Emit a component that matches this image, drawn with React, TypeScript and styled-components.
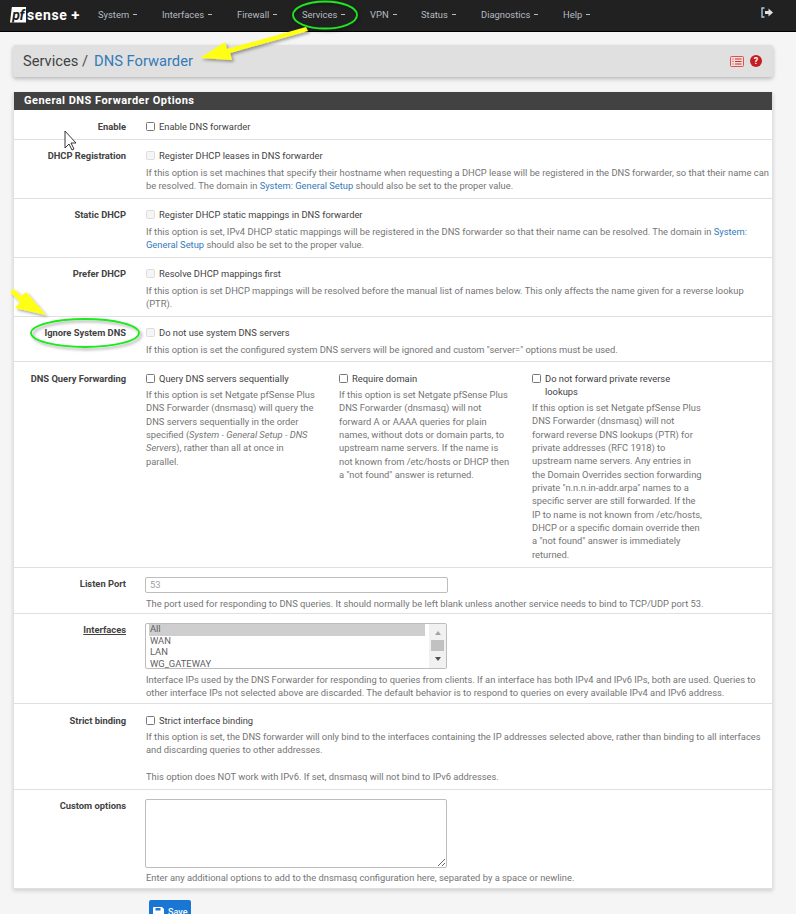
import React from 'react';
import styled, { createGlobalStyle } from 'styled-components';

const GlobalStyle = createGlobalStyle`
  html, body {
    margin: 0;
    padding: 0;
    background: #f5f5f5;
    overflow: hidden;
  }
  body {
    font-family: Roboto, "Liberation Sans", sans-serif;
    font-size: 9.35px;
    color: #424242;
  }
`;

const Page = styled.div`
  position: relative;
  width: 796px;
  height: 914px;
  overflow: hidden;
`;

const NavBar = styled.nav`
  display: flex;
  align-items: center;
  height: 31px;
  background: #212121;
  border-bottom: 1px solid #000;
  padding-left: 10px;
`;

const Logo = styled.div`
  display: flex;
  align-items: center;
  width: 88px;
  margin-bottom: 2px;
  color: #fff;
  font-weight: 700;
  font-size: 14px;
  letter-spacing: 0.6px;
`;

const LogoBadge = styled.span`
  display: inline-block;
  width: 16px;
  height: 16px;
  line-height: 17px;
  background: #fff;
  color: #212121;
  font-style: italic;
  font-size: 14px;
  letter-spacing: -0.5px;
  text-align: center;
  clip-path: polygon(12% 0, 100% 0, 100% 100%, 0 100%);
  margin-right: 1px;
`;

const LogoPlus = styled.span`
  margin-left: 4px;
  font-size: 15px;
  line-height: 16px;
`;

const NavItem = styled.a<{ $width: number }>`
  width: ${({ $width }) => $width}px;
  margin-bottom: 2px;
  color: #b5bcc2;
  font-size: 9.4px;
  white-space: nowrap;
  &::after {
    content: '';
    display: inline-block;
    width: 4px;
    height: 1px;
    margin-left: 4px;
    vertical-align: 3px;
    background: #b5bcc2;
  }
`;

const LogoutIcon = styled.svg`
  position: absolute;
  top: 6px;
  left: 760px;
`;

const Content = styled.main`
  padding: 13px 23px 0 13px;
`;

const Breadcrumb = styled.header`
  display: flex;
  align-items: center;
  height: 32px;
  padding: 0 11px 0 10px;
  background: #e0e0e0;
  border-radius: 3px;
  box-shadow: 0 2px 4px rgba(0, 0, 0, 0.25);
  font-size: 14.7px;
  margin-bottom: 15px;
`;

const Crumb = styled.span`
  color: #424242;
  &::after {
    content: ' /';
    color: #5a4a4a;
    margin-right: 6px;
  }
`;

const CrumbActive = styled.span`
  flex: 1;
  color: #337ab7;
`;

const HeaderIcons = styled.div`
  display: flex;
  align-items: center;
  gap: 6px;
`;

const Panel = styled.section`
  background: #fff;
  border: 1px solid #e0e0e0;
  border-top: 0;
  box-shadow: 0 2px 4px rgba(0, 0, 0, 0.15);
`;

const PanelTitle = styled.h2`
  margin: 0;
  height: 18px;
  line-height: 18px;
  padding-left: 10px;
  background: #424242;
  color: #fff;
  font-size: 11px;
  font-weight: 700;
  letter-spacing: 0.47px;
`;

const Row = styled.div<{ $height: number; $pad?: number }>`
  display: grid;
  grid-template-columns: 112px 1fr;
  column-gap: 20px;
  height: ${({ $height }) => $height}px;
  padding-top: ${({ $pad }) => $pad ?? 9}px;
  box-sizing: border-box;
  border-top: 1px solid #e0e0e0;
  &:first-of-type {
    border-top: 0;
  }
`;

const Label = styled.label<{ $underline?: boolean }>`
  text-align: right;
  font-size: 9.35px;
  font-weight: 700;
  line-height: 13px;
  text-decoration: ${({ $underline }) => ($underline ? 'underline' : 'none')};
`;

const Check = styled.span<{ $disabled?: boolean }>`
  display: inline-block;
  flex: none;
  width: 7px;
  height: 7px;
  border: 1px solid ${({ $disabled }) => ($disabled ? '#ddd' : '#767676')};
  background: ${({ $disabled }) => ($disabled ? '#f5f5f5' : '#fff')};
  border-radius: 1.5px;
  margin-top: 2px;
`;

const CheckLine = styled.div`
  display: flex;
  gap: 4px;
  font-size: 9.35px;
  line-height: 13px;
  color: #424242;
`;

const Help = styled.p<{ $top?: number }>`
  margin: ${({ $top }) => $top ?? 4}px 0 0;
  width: 624px;
  font-size: 9.35px;
  line-height: 13.2px;
  color: #757575;
`;

const Link = styled.a`
  color: #337ab7;
`;

const Columns = styled.div`
  display: grid;
  grid-template-columns: repeat(3, 193px);
`;

const ColumnHelp = styled(Help)<{ $width: number }>`
  width: ${({ $width }) => $width}px;
  line-height: 13.35px;
`;

const TextInput = styled.div`
  width: 293px;
  height: 14px;
  line-height: 14px;
  margin-left: -1px;
  padding: 0 4px;
  border: 1px solid #bdbdbd;
  border-radius: 2px;
  color: #9e9e9e;
  background: #fff;
`;

const ListBox = styled.div`
  display: flex;
  width: 302px;
  height: 46px;
  box-sizing: border-box;
  margin-left: -1px;
  border: 1px solid #bdbdbd;
  border-radius: 2px;
  padding: 0 0 0 3px;
  overflow: hidden;
`;

const ListOptions = styled.ul`
  flex: 1;
  margin: 0;
  padding: 0;
  list-style: none;
`;

const ListOption = styled.li<{ $selected?: boolean }>`
  height: 11.5px;
  line-height: 10px;
  padding-left: 1px;
  color: #616161;
  background: ${({ $selected }) => ($selected ? '#cecece' : 'transparent')};
`;

const ScrollBar = styled.div`
  display: flex;
  flex-direction: column;
  align-items: center;
  width: 17px;
  margin-left: 4px;
  padding-top: 7px;
  background: #f1f1f1;
`;

const ScrollArrow = styled.span<{ $down?: boolean }>`
  width: 0;
  height: 0;
  border-left: 3.5px solid transparent;
  border-right: 3.5px solid transparent;
  border-bottom: ${({ $down }) => ($down ? '0' : '4px solid #a3a3a3')};
  border-top: ${({ $down }) => ($down ? '4px solid #505050' : '0')};
`;

const ScrollThumb = styled.div`
  width: 13px;
  height: 11px;
  margin: 5px 0 6px;
  background: #c1c1c1;
`;

const TextArea = styled.textarea`
  display: block;
  width: 302px;
  height: 69px;
  box-sizing: border-box;
  margin: 0 0 0 -1px;
  border: 1px solid #bdbdbd;
  border-radius: 2px;
  background: #fff;
`;

const SaveButton = styled.button`
  display: flex;
  align-items: center;
  gap: 4px;
  height: 24px;
  width: 42px;
  margin: 11px 0 0 136px;
  padding: 0 0 0 4px;
  border: 0;
  border-radius: 2px;
  background: #1976d2;
  color: #fff;
  font: 500 9px Roboto, sans-serif;
`;

const Annotations = styled.svg`
  position: absolute;
  inset: 0;
  pointer-events: none;
`;

const navItems: [string, number][] = [
  ['System', 64],
  ['Interfaces', 75],
  ['Firewall', 65],
  ['Services', 68],
  ['VPN', 51],
  ['Status', 60],
  ['Diagnostics', 82],
  ['Help', 50],
];

const App = () => (
  <Page>
    <GlobalStyle />
    <NavBar>
      <Logo>
        <LogoBadge>pf</LogoBadge>sense<LogoPlus>+</LogoPlus>
      </Logo>
      {navItems.map(([name, width]) => (
        <NavItem key={name} $width={width}>
          {name}
        </NavItem>
      ))}
      <LogoutIcon width="14" height="14" viewBox="0 0 14 14">
        <path d="M4.5 2H2v9h2.5" fill="none" stroke="#a9cbe6" strokeWidth="1.4" />
        <path d="M5 5h3.5V2.5L13 6.5l-4.5 4V8H5z" fill="#e0e0e0" />
      </LogoutIcon>
    </NavBar>
    <Content>
      <Breadcrumb>
        <Crumb>Services</Crumb>
        <CrumbActive>DNS Forwarder</CrumbActive>
        <HeaderIcons>
          <svg width="14" height="11" viewBox="0 0 14 11">
            <rect x="0.5" y="0.5" width="13" height="10" rx="1" fill="#f3dcda" stroke="#d9534f" />
            <path d="M2.5 3h1M2.5 5.5h1M2.5 8h1M5 3h6.5M5 5.5h6.5M5 8h6.5" stroke="#c9302c" />
          </svg>
          <svg width="12" height="12" viewBox="0 0 12 12">
            <circle cx="6" cy="6" r="6" fill="#c71c22" />
            <text x="6" y="9" fontSize="9" fontWeight="700" fill="#fff" textAnchor="middle">?</text>
          </svg>
        </HeaderIcons>
      </Breadcrumb>
      <Panel>
        <PanelTitle>General DNS Forwarder Options</PanelTitle>
        <Row $height={29} $pad={10}>
          <Label>Enable</Label>
          <CheckLine><Check />Enable DNS forwarder</CheckLine>
        </Row>
        <Row $height={59}>
          <Label>DHCP Registration</Label>
          <div>
            <CheckLine><Check $disabled />Register DHCP leases in DNS forwarder</CheckLine>
            <Help>
              If this option is set machines that specify their hostname when requesting a DHCP lease will be registered in the DNS forwarder, so that their name can be resolved. The domain in <Link>System: General Setup</Link> should also be set to the proper value.
            </Help>
          </div>
        </Row>
        <Row $height={59}>
          <Label>Static DHCP</Label>
          <div>
            <CheckLine><Check $disabled />Register DHCP static mappings in DNS forwarder</CheckLine>
            <Help>
              If this option is set, IPv4 DHCP static mappings will be registered in the DNS forwarder so that their name can be resolved. The domain in <Link>System: General Setup</Link> should also be set to the proper value.
            </Help>
          </div>
        </Row>
        <Row $height={59}>
          <Label>Prefer DHCP</Label>
          <div>
            <CheckLine><Check $disabled />Resolve DHCP mappings first</CheckLine>
            <Help>
              If this option is set DHCP mappings will be resolved before the manual list of names below. This only affects the name given for a reverse lookup (PTR).
            </Help>
          </div>
        </Row>
        <Row $height={45}>
          <Label>Ignore System DNS</Label>
          <div>
            <CheckLine><Check $disabled />Do not use system DNS servers</CheckLine>
            <Help>
              If this option is set the configured system DNS servers will be ignored and custom "server=" options must be used.
            </Help>
          </div>
        </Row>
        <Row $height={206} $pad={10}>
          <Label>DNS Query Forwarding</Label>
          <Columns>
            <div>
              <CheckLine><Check />Query DNS servers sequentially</CheckLine>
              <ColumnHelp $top={3} $width={170}>
                If this option is set Netgate pfSense Plus DNS Forwarder (dnsmasq) will query the DNS servers sequentially in the order specified (<i>System - General Setup - DNS Servers</i>), rather than all at once in parallel.
              </ColumnHelp>
            </div>
            <div>
              <CheckLine><Check />Require domain</CheckLine>
              <ColumnHelp $top={3} $width={174}>
                If this option is set Netgate pfSense Plus DNS Forwarder (dnsmasq) will not forward A or AAAA queries for plain names, without dots or domain parts, to upstream name servers. If the name is not known from /etc/hosts or DHCP then a "not found" answer is returned.
              </ColumnHelp>
            </div>
            <div>
              <CheckLine><Check /><span>Do not forward private reverse<br />lookups</span></CheckLine>
              <ColumnHelp $top={3} $width={174}>
                If this option is set Netgate pfSense Plus DNS Forwarder (dnsmasq) will not forward reverse DNS lookups (PTR) for private addresses (RFC 1918) to upstream name servers. Any entries in the Domain Overrides section forwarding private "n.n.n.in-addr.arpa" names to a specific server are still forwarded. If the IP to name is not known from /etc/hosts, DHCP or a specific domain override then a "not found" answer is immediately returned.
              </ColumnHelp>
            </div>
          </Columns>
        </Row>
        <Row $height={46}>
          <Label>Listen Port</Label>
          <div>
            <TextInput>53</TextInput>
            <Help>
              The port used for responding to DNS queries. It should normally be left blank unless another service needs to bind to TCP/UDP port 53.
            </Help>
          </div>
        </Row>
        <Row $height={90}>
          <Label $underline>Interfaces</Label>
          <div>
            <ListBox>
              <ListOptions>
                <ListOption $selected>All</ListOption>
                <ListOption>WAN</ListOption>
                <ListOption>LAN</ListOption>
                <ListOption>WG_GATEWAY</ListOption>
              </ListOptions>
              <ScrollBar>
                <ScrollArrow />
                <ScrollThumb />
                <ScrollArrow $down />
              </ScrollBar>
            </ListBox>
            <Help $top={4}>
              Interface IPs used by the DNS Forwarder for responding to queries from clients. If an interface has both IPv4 and IPv6 IPs, both are used. Queries to other interface IPs not selected above are discarded. The default behavior is to respond to queries on every available IPv4 and IPv6 address.
            </Help>
          </div>
        </Row>
        <Row $height={86} $pad={10}>
          <Label>Strict binding</Label>
          <div>
            <CheckLine><Check />Strict interface binding</CheckLine>
            <Help $top={3}>
              If this option is set, the DNS forwarder will only bind to the interfaces containing the IP addresses selected above, rather than binding to all interfaces and discarding queries to other addresses.
              <br /><br />
              This option does NOT work with IPv6. If set, dnsmasq will not bind to IPv6 addresses.
            </Help>
          </div>
        </Row>
        <Row $height={99}>
          <Label>Custom options</Label>
          <div>
            <TextArea readOnly />
            <Help $top={3}>
              Enter any additional options to add to the dnsmasq configuration here, separated by a space or newline.
            </Help>
          </div>
        </Row>
      </Panel>
      <SaveButton>
        <svg width="11" height="11" viewBox="0 0 11 11">
          <path d="M1 0h8l2 2v8a1 1 0 0 1-1 1H1a1 1 0 0 1-1-1V1a1 1 0 0 1 1-1z" fill="#fff" />
          <rect x="2.5" y="1" width="5" height="2.5" fill="#1976d2" />
        </svg>
        Save
      </SaveButton>
    </Content>
    <Annotations width="796" height="914" viewBox="0 0 796 914">
      <defs>
        <filter id="drop" x="-20%" y="-20%" width="150%" height="150%">
          <feDropShadow dx="2" dy="2" stdDeviation="1.5" floodColor="#000" floodOpacity="0.35" />
        </filter>
      </defs>
      <g filter="url(#drop)">
        <ellipse cx="325" cy="15" rx="32" ry="13.5" fill="none" stroke="#1fe81f" strokeWidth="1.8" />
        <ellipse cx="85" cy="333" rx="54" ry="14" fill="none" stroke="#1fe81f" strokeWidth="1.8" />
        <path d="M306 27L227 49L225 42L200 58L232 60L230 53L308 31z" fill="#ffff14" />
        <path d="M10 292L14 289L21 296L26 292L46 315L15 308L20 302z" fill="#ffff14" />
      </g>
      <path d="M65 131v17l4-4 3 6 2-1-3-6h5z" fill="#fff" stroke="#222" strokeWidth="0.9" />
    </Annotations>
  </Page>
);

export default App;
